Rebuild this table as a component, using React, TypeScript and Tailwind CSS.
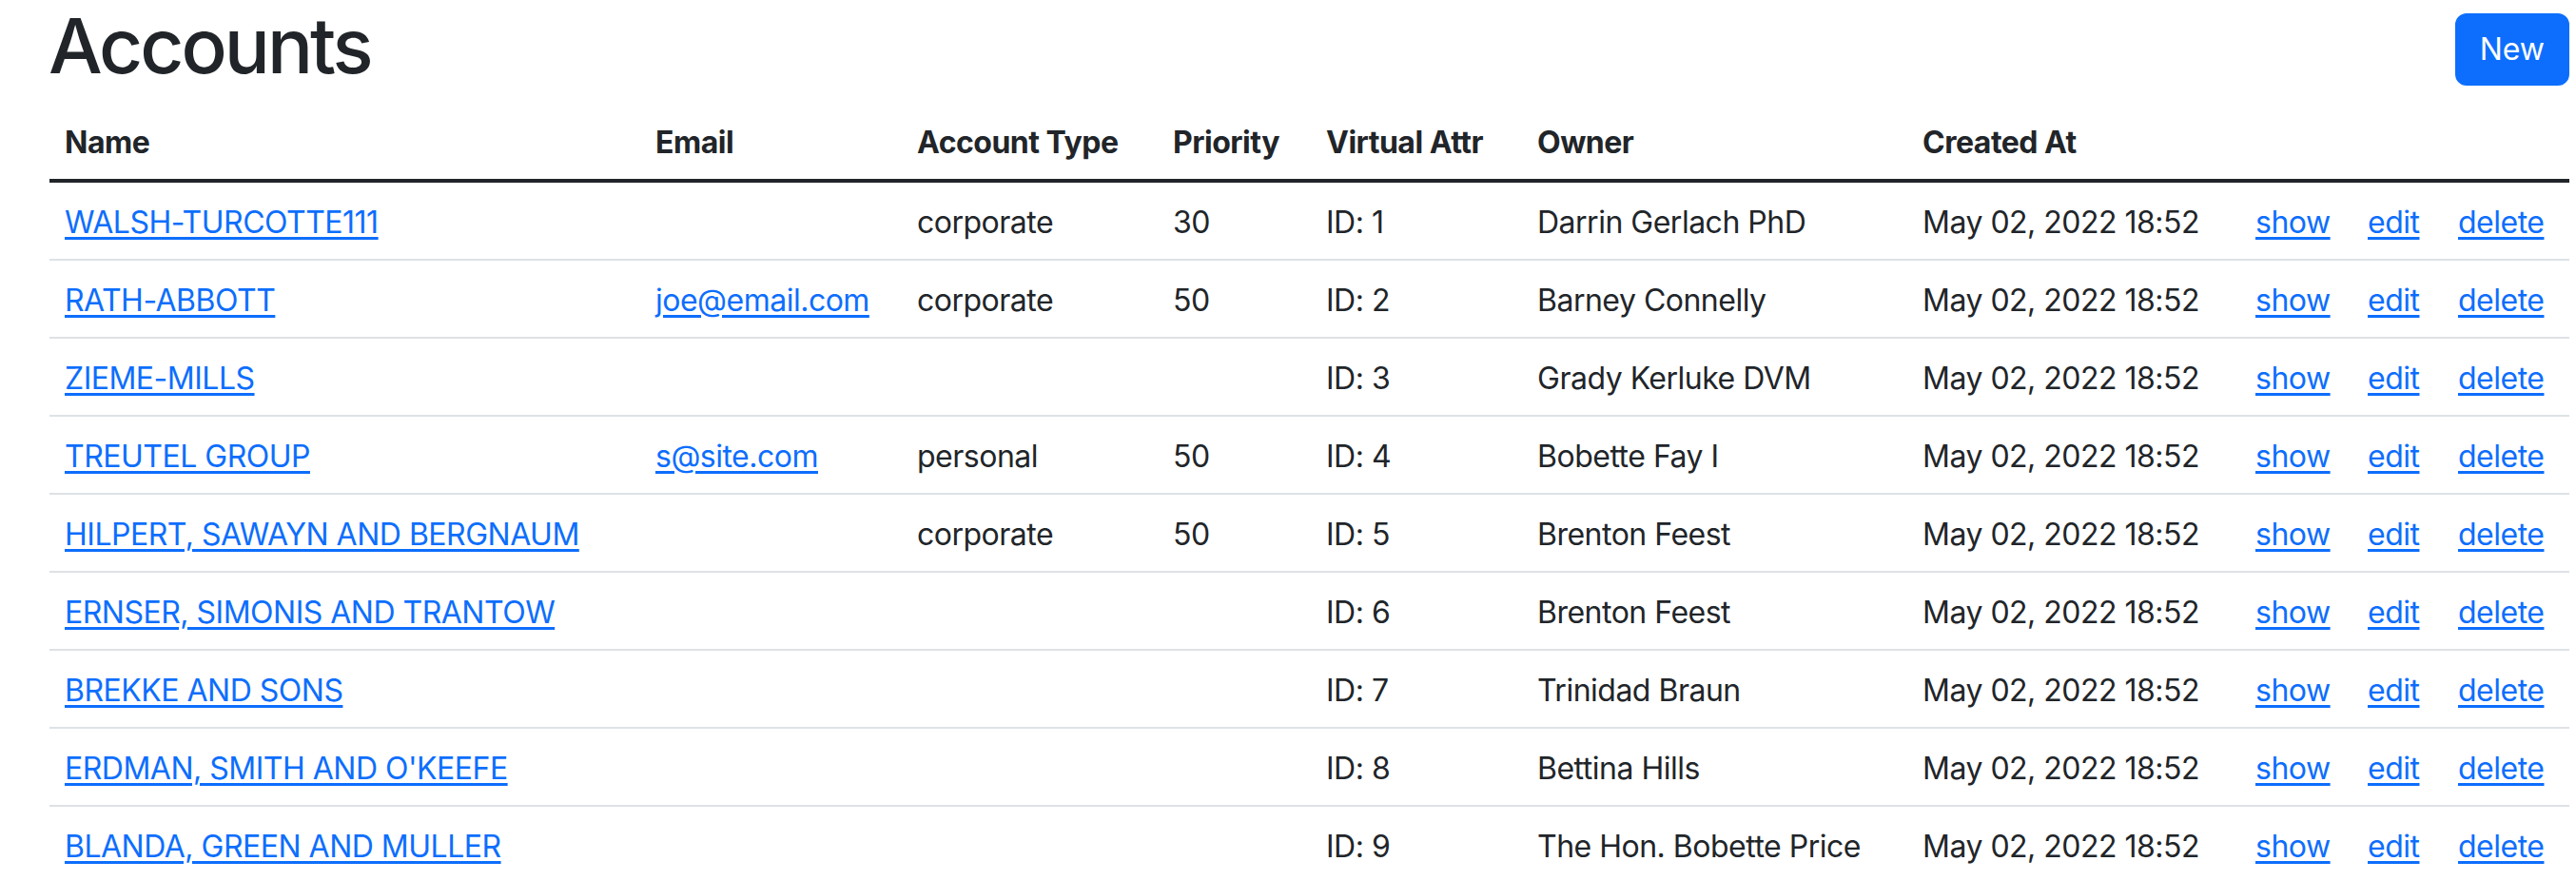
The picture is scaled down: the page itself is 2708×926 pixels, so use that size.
const ROWS = [
  { name: 'WALSH-TURCOTTE111', email: '', type: 'corporate', priority: '30', id: 1, owner: 'Darrin Gerlach PhD' },
  { name: 'RATH-ABBOTT', email: 'joe@email.com', type: 'corporate', priority: '50', id: 2, owner: 'Barney Connelly' },
  { name: 'ZIEME-MILLS', email: '', type: '', priority: '', id: 3, owner: 'Grady Kerluke DVM' },
  { name: 'TREUTEL GROUP', email: 's@site.com', type: 'personal', priority: '50', id: 4, owner: 'Bobette Fay I' },
  { name: 'HILPERT, SAWAYN AND BERGNAUM', email: '', type: 'corporate', priority: '50', id: 5, owner: 'Brenton Feest' },
  { name: 'ERNSER, SIMONIS AND TRANTOW', email: '', type: '', priority: '', id: 6, owner: 'Brenton Feest' },
  { name: 'BREKKE AND SONS', email: '', type: '', priority: '', id: 7, owner: 'Trinidad Braun' },
  { name: "ERDMAN, SMITH AND O'KEEFE", email: '', type: '', priority: '', id: 8, owner: 'Bettina Hills' },
  { name: 'BLANDA, GREEN AND MULLER', email: '', type: '', priority: '', id: 9, owner: 'The Hon. Bobette Price' },
];

const HEADERS = ['Name', 'Email', 'Account Type', 'Priority', 'Virtual Attr', 'Owner', 'Created At', '', '', ''];

const link = 'text-[#0d6efd] underline decoration-[3px] underline-offset-[4px]';
const cell = 'px-[16px] pt-[18px] pb-[14px] whitespace-nowrap';

export default function App() {
  return (
    <div className="font-['Inter',sans-serif] text-[32px] leading-[48px] tracking-[-0.5px] text-[#212529] bg-white pl-[52px] pr-[7px] min-h-screen">
      <div className="flex items-start justify-between h-[110px]">
        <h1 className="text-[80px] leading-[96px] font-medium tracking-[-3px] -ml-[1px]">Accounts</h1>
        <button className="mt-[14px] h-[76px] px-[24px] rounded-[12px] bg-[#0d6efd] text-white border-2 border-[#0d6efd] tracking-normal">
          New
        </button>
      </div>

      <table className="w-[2649px] table-fixed border-collapse text-left">
        <colgroup>
          <col className="w-[621px]" />
          <col className="w-[275px]" />
          <col className="w-[269px]" />
          <col className="w-[161px]" />
          <col className="w-[222px]" />
          <col className="w-[405px]" />
          <col className="w-[350px]" />
          <col className="w-[118px]" />
          <col className="w-[95px]" />
          <col className="w-[133px]" />
        </colgroup>
        <thead>
          <tr className="border-b-[4px] border-[#212529]">
            {HEADERS.map((h, i) => (
              <th key={i} className="px-[16px] pt-[16px] pb-[14px] font-bold whitespace-nowrap">{h}</th>
            ))}
          </tr>
        </thead>
        <tbody>
          {ROWS.map((r) => (
            <tr key={r.id} className="border-b-2 border-[#dee2e6]">
              <td className={cell}><a className={link}>{r.name}</a></td>
              <td className={cell}>{r.email && <a className={link}>{r.email}</a>}</td>
              <td className={cell}>{r.type}</td>
              <td className={cell}>{r.priority}</td>
              <td className={cell}>ID: {r.id}</td>
              <td className={cell}>{r.owner}</td>
              <td className={cell}>May 02, 2022 18:52</td>
              <td className={cell}><a className={link}>show</a></td>
              <td className={cell}><a className={link}>edit</a></td>
              <td className={cell}><a className={link}>delete</a></td>
            </tr>
          ))}
        </tbody>
      </table>
    </div>
  );
}
